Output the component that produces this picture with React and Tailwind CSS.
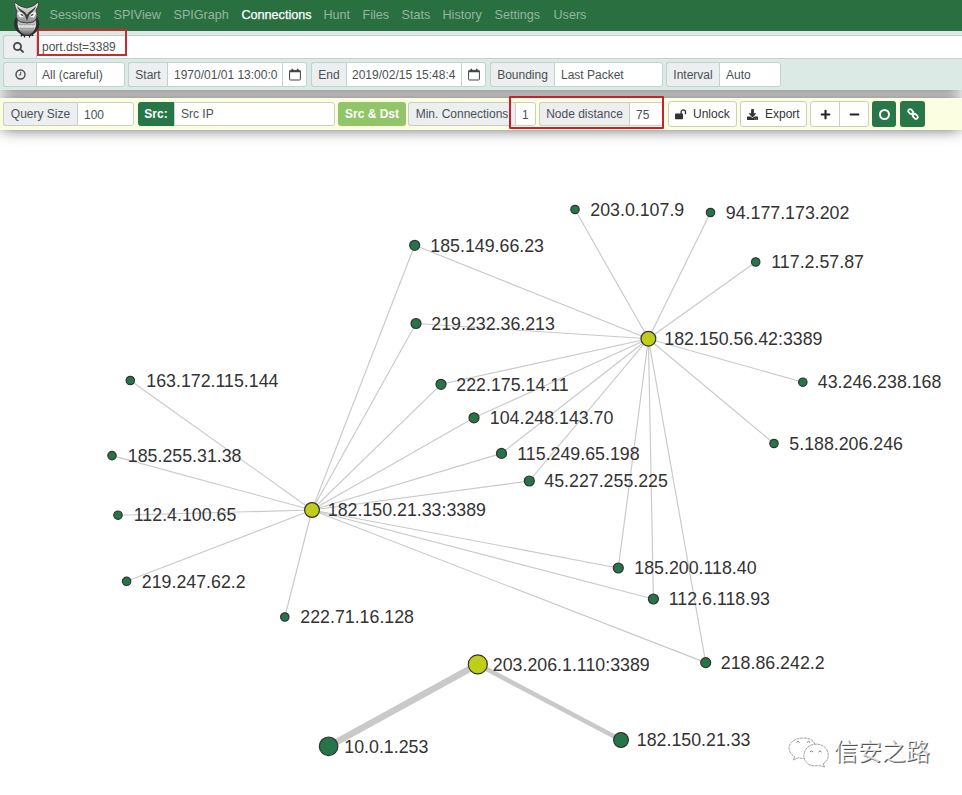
import React from 'react';
import { FaSearch, FaPlus, FaMinus, FaDownload } from 'react-icons/fa';

const navItems = [
  ['Sessions', 'w-[64px]'],
  ['SPIView', 'w-[60px]'],
  ['SPIGraph', 'w-[68px]'],
  ['Connections', 'w-[82px]'],
  ['Hunt', 'w-[39px]'],
  ['Files', 'w-[39px]'],
  ['Stats', 'w-[41px]'],
  ['History', 'w-[52px]'],
  ['Settings', 'w-[59px]'],
  ['Users', 'w-[40px]'],
];

// [id, x, y, radius, label, label x, hub]
const nodes = [
  ['a', 575, 209.5, 4.2, '203.0.107.9', 590],
  ['b', 710.5, 212.5, 4.2, '94.177.173.202', 725.5],
  ['c', 755.7, 262, 4.2, '117.2.57.87', 771],
  ['d', 414.7, 245.3, 5, '185.149.66.23', 430],
  ['e', 416, 323.5, 5, '219.232.36.213', 431],
  ['f', 441, 384.3, 5, '222.175.14.11', 456],
  ['g', 474, 417.8, 5, '104.248.143.70', 489.5],
  ['h', 501.5, 453.4, 5, '115.249.65.198', 517],
  ['i', 529.3, 481, 5, '45.227.255.225', 544],
  ['j', 130.3, 380.5, 4.2, '163.172.115.144', 146],
  ['k', 112, 455.6, 4.2, '185.255.31.38', 127.5],
  ['l', 118, 515.2, 4.2, '112.4.100.65', 133.5],
  ['m', 126.6, 581.3, 4.2, '219.247.62.2', 141.5],
  ['n', 284.8, 617, 4.2, '222.71.16.128', 300],
  ['o', 802.8, 382.2, 4.2, '43.246.238.168', 817.5],
  ['p', 774, 443.5, 4.2, '5.188.206.246', 789],
  ['q', 618.3, 568, 5, '185.200.118.40', 634],
  ['r', 653.4, 599, 5, '112.6.118.93', 668.5],
  ['s', 705.7, 662.6, 5, '218.86.242.2', 720.5],
  ['X', 648.4, 338.7, 7.4, '182.150.56.42:3389', 664, 1],
  ['Y', 312, 510, 7.4, '182.150.21.33:3389', 327.5, 1],
  ['Z', 477.8, 664.4, 9.5, '203.206.1.110:3389', 492.5, 1],
  ['t', 328.6, 746.3, 9.3, '10.0.1.253', 344],
  ['u', 621, 740, 7.4, '182.150.21.33', 636.5],
];

const byId = Object.fromEntries(nodes.map((n) => [n[0], n]));

const links = [
  ...[...'abcdefghiopqrs'].map((id) => ['X', id, 1.15]),
  ...[...'defghijklmnqrs'].map((id) => ['Y', id, 1.15]),
  ['Z', 't', 6.5],
  ['Z', 'u', 4.5],
];

function Owl() {
  return (
    <svg className="block" width="28" height="37" viewBox="0 0 28 37">
      <defs>
        <linearGradient id="belly" x1="0" y1="0" x2="0" y2="1">
          <stop offset="0" stopColor="#999" />
          <stop offset=".45" stopColor="#e2e2e2" />
          <stop offset="1" stopColor="#4a4a4a" />
        </linearGradient>
        <linearGradient id="face" x1="0" y1="0" x2="0" y2="1">
          <stop offset="0" stopColor="#f5f5f5" />
          <stop offset="1" stopColor="#8a8a8a" />
        </linearGradient>
      </defs>
      <path d="M3 16C-.5 22 1 29 6 32L10 35H18L22 32C27 28 27.500 22 24 16Z" fill="#2d2d2d" />
      <path d="M5 18Q14 22 22.500 18C25 25 21 33 14 34.500C7 33 3 26 5 18Z" fill="url(#belly)" />
      <path d="M2 1C1 5 3 8 4 10C2 15 4 20 8 21L14 22L20 21C24 19 25 14 23 9C25 6 26 3 25 1C22 5 17 6 14 7C10 6 5 5 2 1Z" fill="url(#face)" stroke="#333" strokeWidth=".9" />
      <path d="M4 5C7 9 11 9 14 14C17 9 20 9 23 5C22 10 18 11 15.500 15H12.500C10 11 5 10 4 5Z" fill="#383838" />
      <path d="M4.500 12Q8 10 11.500 14Q10 17 7 16.500ZM23 12Q19.500 10 16.500 14Q18 17 21 16.500Z" fill="#f7f7f7" />
      <path d="M7 12.800L11 14L9 15ZM21 12.800L17 14L19 15Z" fill="#222" />
      <path d="M12.300 15H15.700L14 20Z" fill="#3a3a3a" />
      <path d="M6 23Q8 25 10 23Q12 25 14 23Q16 25 18 23Q20 25 22 23M7 27Q9 29 11 27Q13 29 15 27Q17 29 21 27M9 31Q12 33 14 31Q16 33 19 31" stroke="#858585" strokeWidth=".7" fill="none" />
      <path d="M9 33L8 35.500M11.500 34V36.500M16.500 34V36.500M19 33L20 35" stroke="#222" strokeWidth="1.3" />
    </svg>
  );
}

function ClockIcon() {
  return (
    <svg width="11" height="11" viewBox="0 0 11 11" fill="none" stroke="#4b4b4b">
      <circle cx="5.5" cy="5.5" r="4.5" strokeWidth="1.4" />
      <path d="M5.7 2.8V6H3.7" strokeWidth="1" />
    </svg>
  );
}

function CalendarIcon() {
  return (
    <svg width="12" height="13" viewBox="0 0 12 13" fill="none" stroke="#444">
      <rect x=".6" y="2.4" width="10.8" height="9.600" rx=".7" strokeWidth="1" />
      <path d="M.6 3.500H11.400" strokeWidth="1.600" />
      <path d="M3.300 .8V3.300M8.700 .8V3.300" strokeWidth="1.600" />
    </svg>
  );
}

function UnlockIcon() {
  return (
    <svg width="12" height="11" viewBox="0 0 12 11">
      <rect x="0" y="4.500" width="8" height="5.700" rx=".7" fill="#333" />
      <path d="M6.100 5V3.100A2.200 2.200 0 0 1 10.500 3.100V5.200" fill="none" stroke="#333" strokeWidth="1.300" />
    </svg>
  );
}

function ChainIcon() {
  return (
    <svg width="12" height="12" viewBox="0 0 12 12" fill="none" stroke="#fff" strokeWidth="1.700">
      <rect x="1" y="1.900" width="5.400" height="3.600" rx="1.700" transform="rotate(45 3.700 3.700)" />
      <rect x="5.600" y="6.500" width="5.400" height="3.600" rx="1.700" transform="rotate(45 8.300 8.300)" />
      <path d="M4.700 4.700L7.300 7.300" strokeWidth="1.300" />
    </svg>
  );
}

const Addon = ({ className, children }) => (
  <div className={`flex shrink-0 items-center justify-center rounded-l-[3px] border border-r-0 bg-[#eceeef] whitespace-nowrap ${className}`}>{children}</div>
);

const Field = ({ className, children }) => (
  <div className={`flex shrink-0 items-center overflow-hidden border bg-white whitespace-nowrap ${className}`}>{children}</div>
);

export default function App() {
  return (
    <div className="flex h-[795px] w-[962px] flex-col overflow-hidden bg-white font-['Liberation_Sans',Arial,sans-serif] text-[12px] text-[#4b5054]">
      <nav className="flex h-[31px] shrink-0 items-start bg-[#2a6f3f] text-[12.6px] text-[#94b79f]">
        <div className="relative z-30 ml-[13px] w-[36.5px] shrink-0 pt-px"><Owl /></div>
        {navItems.map(([label, width]) => (
          <div key={label} className={`${width} shrink-0 pt-[6px] leading-[19px] ${label === 'Connections' ? 'text-white [-webkit-text-stroke:0.25px_white]' : ''}`}>{label}</div>
        ))}
      </nav>

      <div className="relative z-20 flex h-[59px] shrink-0 flex-col gap-[3px] bg-[#dbeae5] pt-1 pl-[3px]">
        <div className="flex h-6 w-full">
          <Addon className="w-[33px] border-[#bfd3cf]"><FaSearch size={11} color="#444" className="-ml-1" /></Addon>
          <div className="relative flex grow items-center border border-r-0 border-[#bfd3cf] bg-white pl-[5px]">
            port.dst=3389
            <div className="absolute -top-[7px] left-0 h-[27px] w-[90px] border-2 border-[#c32c31]" />
          </div>
        </div>
        <div className="flex h-[25px]">
          <Addon className="w-[33px] border-[#bfd3cf]"><ClockIcon /></Addon>
          <Field className="mr-[3px] w-[89px] rounded-r-[3px] border-[#bfd3cf] pl-[5px]">All (careful)</Field>
          <Addon className="w-[39px] border-[#bfd3cf]">Start</Addon>
          <Field className="w-[116px] border-[#bfd3cf] pl-[6px]">1970/01/01 13:00:0</Field>
          <Field className="mr-[4px] w-[24px] justify-center rounded-r-[3px] border-l-0 border-[#bfd3cf]"><CalendarIcon /></Field>
          <Addon className="w-[35px] border-[#bfd3cf]">End</Addon>
          <Field className="w-[116px] border-[#bfd3cf] pl-[5px]">2019/02/15 15:48:4</Field>
          <Field className="mr-[4px] w-[24px] justify-center rounded-r-[3px] border-l-0 border-[#bfd3cf]"><CalendarIcon /></Field>
          <Addon className="w-[64px] border-[#bfd3cf]">Bounding</Addon>
          <Field className="mr-[3px] w-[109px] rounded-r-[3px] border-[#bfd3cf] pl-[6px]">Last Packet</Field>
          <Addon className="w-[53px] border-[#bfd3cf]">Interval</Addon>
          <Field className="w-[62px] rounded-r-[3px] border-[#bfd3cf] pl-[6px]">Auto</Field>
        </div>
      </div>

      <div className="relative z-10 -mt-[32px] mb-[8px] h-[32px] shrink-0 shadow-[0_0_16px_-2px_rgba(0,0,0,0.75)]" />

      <div className="relative z-20 flex h-[32px] shrink-0 items-center bg-[#fcfee2] pl-[3px]">
        <Addon className="h-6 w-[74px] border-[#cccfbd]">Query Size</Addon>
        <Field className="mr-[4px] h-6 w-[57px] rounded-r-[3px] border-[#cccfbd] pt-px pl-[6px]">100</Field>
        <div className="flex h-6 w-[36px] items-center justify-center rounded-l-[3px] bg-[#287748] font-bold text-white">Src:</div>
        <Field className="mr-[3px] h-6 w-[161px] rounded-r-[3px] border-[#cccfbd] pl-[6px]">Src IP</Field>
        <div className="mr-[2px] flex h-6 w-[68px] items-center justify-center rounded-[3px] bg-[#92c468] font-bold whitespace-nowrap text-white">Src &amp; Dst</div>
        <Addon className="h-6 w-[107px] border-[#cccfbd]">Min. Connections</Addon>
        <div className="relative flex h-6">
          <Field className="mr-[3px] h-6 w-[21px] rounded-r-[3px] border-[#cccfbd] pt-px pl-[6px]">1</Field>
          <Addon className="h-6 w-[90px] border-[#cccfbd]">Node distance</Addon>
          <Field className="h-6 w-[34px] border-[#cccfbd] pt-px pl-[6px]">75</Field>
          <div className="absolute -top-[6px] -left-[6px] h-[33px] w-[155px] rounded-[1px] border-2 border-[#c91f2b]" />
        </div>
        <div className="ml-[5px] flex h-[26px] w-[69px] items-center rounded-[3px] border border-[#cccfbd] bg-white pl-[6px] text-[#333]"><UnlockIcon /><span className="ml-[6px]">Unlock</span></div>
        <div className="ml-[3px] flex h-[26px] w-[67px] items-center rounded-[3px] border border-[#cccfbd] bg-white pl-[6px] text-[#333]"><FaDownload size={11} /><span className="ml-[7px]">Export</span></div>
        <div className="ml-[3px] flex h-[26px] w-[59px] rounded-[3px] border border-[#cccfbd] bg-white text-[#222]">
          <div className="flex w-[29px] items-center justify-center border-r border-[#cccfbd]"><FaPlus size={11} /></div>
          <div className="flex grow items-center justify-center"><FaMinus size={11} /></div>
        </div>
        <div className="ml-[3px] flex h-[26px] w-[24px] items-center justify-center rounded-[3px] bg-[#287748]"><div className="size-[11px] rounded-full border-2 border-white" /></div>
        <div className="ml-[4px] flex h-[26px] w-[25px] items-center justify-center rounded-[3px] bg-[#287748]"><ChainIcon /></div>
      </div>

      <div className="relative z-10 -mt-[32px] h-[32px] shrink-0 shadow-[0_0_16px_-2px_rgba(0,0,0,0.75)]" />

      <svg className="block shrink-0" width="962" height="665" viewBox="0 130 962 665">
        {links.map(([from, to, width]) => (
          <line key={from + to} x1={byId[from][1]} y1={byId[from][2]} x2={byId[to][1]} y2={byId[to][2]} stroke="#c9c9c9" strokeWidth={width} />
        ))}
        {nodes.map(([id, x, y, r, label, tx, hub]) => (
          <g key={id}>
            <circle cx={x} cy={y} r={r} fill={hub ? '#bfce16' : '#267548'} stroke="#333" strokeWidth="1.2" />
            <text x={tx + 0.3} y={y + 6.2} fontSize="17.8" fill="#333">{label}</text>
          </g>
        ))}
        <g fill="#fff" stroke="#999" strokeWidth=".9" strokeDasharray="3 .6">
          <path d="M795 757L793 760L799 757.5Q802 759 806 758C818 757 820 738 804 738C789 738 784 750 795 757Z" />
          <path d="M823 764L825 767L819 765.5C808 768 803 760 804 754C806 741 826 741 828 753C829 758 827 761 823 764Z" />
        </g>
        <path d="M796.5 742.5Q798 740 799.5 742.5M807 742.5Q808.500 740 810 742.5M810 752Q811.500 749.500 813 752M818.500 752Q820 749.500 821.500 752" fill="none" stroke="#777" />
        <g fontSize="24" fontFamily="'Noto Sans CJK SC', sans-serif" fontWeight="400">
          <text x="834.8" y="760.800" fill="#555">信安之路</text>
          <text x="833.800" y="759.800" fill="#fff" opacity=".75">信安之路</text>
        </g>
      </svg>
    </div>
  );
}
